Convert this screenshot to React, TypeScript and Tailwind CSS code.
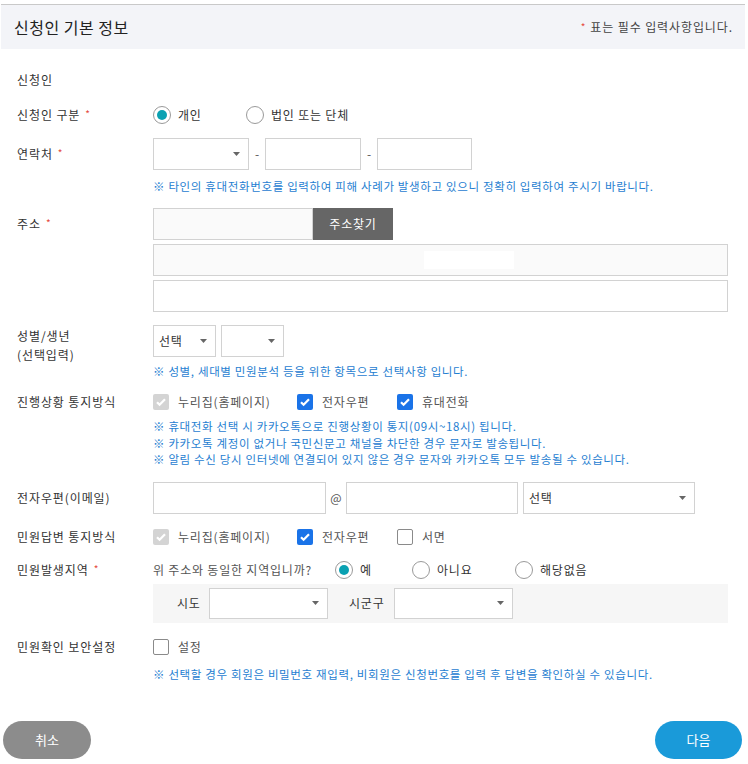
import React from "react";

const FONT = { fontFamily: '"Noto Sans CJK KR", "Noto Sans", sans-serif' };

function Req() {
  return <span className="ml-[5px] text-[10px] text-[#e5493e] relative -top-[2px]">*</span>;
}

function Label({ children, req }: { children: React.ReactNode; req?: boolean }) {
  return (
    <div className="w-[136px] shrink-0 text-[12px] tracking-[0.9px] leading-[20px] text-[#333]">
      {children}
      {req && <Req />}
    </div>
  );
}

function Arrow() {
  return (
    <svg width="7" height="4" viewBox="0 0 7 4" className="shrink-0">
      <path d="M0 0h7L3.5 4z" fill="#666" />
    </svg>
  );
}

function Select({ w, text, h = "h-[32px]" }: { w: string; text?: string; h?: string }) {
  return (
    <div
      className={`${w} ${h} shrink-0 border border-[#d2d2d2] bg-white flex items-center justify-between pl-[5px] pr-[8px] text-[12px] tracking-[0.8px] text-[#333]`}
    >
      <span>{text}</span>
      <Arrow />
    </div>
  );
}

function Box({ w, bg = "bg-white" }: { w: string; bg?: string }) {
  return <div className={`${w} h-[32px] shrink-0 border border-[#d2d2d2] ${bg}`} />;
}

function Note({ children }: { children: React.ReactNode }) {
  return <p className="text-[11.5px] tracking-[0.65px] leading-[16.5px] text-[#1f80d1] whitespace-nowrap">{children}</p>;
}

function Radio({ on }: { on?: boolean }) {
  return (
    <span className="w-[18px] h-[18px] rounded-full border border-[#9a9a9a] bg-white flex items-center justify-center shrink-0">
      {on && <span className="w-[10px] h-[10px] rounded-full bg-[#0aa1b2]" />}
    </span>
  );
}

function Check({ state }: { state: "on" | "off" | "disabled" }) {
  if (state === "off")
    return <span className="w-[16px] h-[16px] rounded-[2px] border border-[#8a8a8a] bg-white shrink-0" />;
  const bg = state === "on" ? "bg-[#1a73e8]" : "bg-[#d4d4d4]";
  return (
    <span className={`w-[16px] h-[16px] rounded-[2px] ${bg} flex items-center justify-center shrink-0`}>
      <svg width="12" height="12" viewBox="0 0 12 12">
        <path d="M2 6.2l2.6 2.6L10 3.2" stroke="#fff" strokeWidth="2.2" fill="none" />
      </svg>
    </span>
  );
}

function CheckItem({ state, label, w }: { state: "on" | "off" | "disabled"; label: string; w?: string }) {
  return (
    <div className={`flex items-center gap-[9px] ${w ?? ""}`}>
      <Check state={state} />
      <span className="text-[12px] tracking-[0.8px] text-[#555]">{label}</span>
    </div>
  );
}

function RadioItem({ on, label, w }: { on?: boolean; label: string; w?: string }) {
  return (
    <div className={`flex items-center gap-[7px] ${w ?? ""}`}>
      <Radio on={on} />
      <span className="text-[12px] tracking-[0.8px] text-[#333]">{label}</span>
    </div>
  );
}

export default function App() {
  return (
    <div className="w-[748px] h-[764px] bg-white overflow-hidden" style={FONT}>
      {/* header */}
      <div className="pt-[4px] pl-[1px] pr-[3px]">
        <div className="border-t border-[#c9c9c9] bg-[#f3f4f8] h-[45px] flex items-center justify-between pl-[13px] pr-[12px]">
          <h2 className="text-[16px] tracking-[0.5px] text-[#222]">신청인 기본 정보</h2>
          <p className="text-[12px] tracking-[0.9px] text-[#444]">
            <span className="text-[10px] text-[#e5493e] mr-[4px] relative -top-[1px]">*</span>표는 필수 입력사항입니다.
          </p>
        </div>
      </div>

      <div className="pl-[17px] pr-[20px]">
        <div className="mt-[21px] text-[12px] tracking-[0.9px] leading-[20px] text-[#333]">신청인</div>

        {/* 신청인 구분 */}
        <div className="mt-[15px] flex">
          <Label req>신청인 구분</Label>
          <div className="flex items-center h-[20px]">
            <RadioItem on label="개인" w="w-[93px]" />
            <RadioItem label="법인 또는 단체" />
          </div>
        </div>

        {/* 연락처 */}
        <div className="mt-[12px] flex">
          <div className="pt-[6px]">
            <Label req>연락처</Label>
          </div>
          <div>
            <div className="flex items-center">
              <Select w="w-[96px]" />
              <span className="w-[16px] text-center text-[12px] text-[#555]">-</span>
              <Box w="w-[96px]" />
              <span className="w-[16px] text-center text-[12px] text-[#555]">-</span>
              <Box w="w-[95px]" />
            </div>
            <div className="mt-[8px]">
              <Note>※ 타인의 휴대전화번호를 입력하여 피해 사례가 발생하고 있으니 정확히 입력하여 주시기 바랍니다.</Note>
            </div>
          </div>
        </div>

        {/* 주소 */}
        <div className="mt-[13px] flex">
          <div className="pt-[6px]">
            <Label req>주소</Label>
          </div>
          <div className="flex-1 flex flex-col gap-[4px]">
            <div className="flex">
              <Box w="w-[160px]" bg="bg-[#fafafa]" />
              <button className="w-[80px] h-[32px] bg-[#666] text-white text-[12px] tracking-[0.8px]">주소찾기</button>
            </div>
            <div className="h-[32px] border border-[#d2d2d2] bg-[#fafafa] pl-[270px] py-[6px]">
              <div className="w-[90px] h-full bg-white" />
            </div>
            <div className="h-[32px] border border-[#d2d2d2] bg-white" />
          </div>
        </div>

        {/* 성별/생년 */}
        <div className="mt-[13px] flex">
          <div className="w-[136px] shrink-0 pt-[1px] text-[12px] tracking-[0.9px] leading-[19px] text-[#333]">
            <p>성별/생년</p>
            <p>(선택입력)</p>
          </div>
          <div>
            <div className="flex gap-[5px]">
              <Select w="w-[63px]" text="선택" />
              <Select w="w-[63px]" />
            </div>
            <div className="mt-[6px]">
              <Note>※ 성별, 세대별 민원분석 등을 위한 항목으로 선택사항 입니다.</Note>
            </div>
          </div>
        </div>

        {/* 진행상황 통지방식 */}
        <div className="mt-[13px] flex">
          <Label>진행상황 통지방식</Label>
          <div>
            <div className="flex items-center h-[20px]">
              <CheckItem state="disabled" label="누리집(홈페이지)" w="w-[144px]" />
              <CheckItem state="on" label="전자우편" w="w-[100px]" />
              <CheckItem state="on" label="휴대전화" />
            </div>
            <div className="mt-[6px]">
              <Note>※ 휴대전화 선택 시 카카오톡으로 진행상황이 통지(09시~18시) 됩니다.</Note>
              <Note>※ 카카오톡 계정이 없거나 국민신문고 채널을 차단한 경우 문자로 발송됩니다.</Note>
              <Note>※ 알림 수신 당시 인터넷에 연결되어 있지 않은 경우 문자와 카카오톡 모두 발송될 수 있습니다.</Note>
            </div>
          </div>
        </div>

        {/* 전자우편 */}
        <div className="mt-[14px] flex">
          <div className="pt-[6px]">
            <Label>전자우편(이메일)</Label>
          </div>
          <div className="flex items-center">
            <Box w="w-[173px]" />
            <span className="w-[20px] text-center text-[12px] text-[#555]">@</span>
            <Box w="w-[172px]" />
            <div className="w-[5px]" />
            <Select w="w-[172px]" text="선택" />
          </div>
        </div>

        {/* 민원답변 통지방식 */}
        <div className="mt-[13px] flex">
          <Label>민원답변 통지방식</Label>
          <div className="flex items-center h-[20px]">
            <CheckItem state="disabled" label="누리집(홈페이지)" w="w-[144px]" />
            <CheckItem state="on" label="전자우편" w="w-[100px]" />
            <CheckItem state="off" label="서면" />
          </div>
        </div>

        {/* 민원발생지역 */}
        <div className="mt-[13px] flex">
          <Label req>민원발생지역</Label>
          <div className="flex-1">
            <div className="flex items-center h-[20px]">
              <span className="w-[182px] text-[12px] tracking-[0.8px] text-[#555]">위 주소와 동일한 지역입니까?</span>
              <RadioItem on label="예" w="w-[77px]" />
              <RadioItem label="아니요" w="w-[103px]" />
              <RadioItem label="해당없음" />
            </div>
            <div className="mt-[4px] h-[39px] bg-[#f6f6f6] flex items-center pl-[24px] text-[12px] tracking-[0.8px] text-[#333]">
              <span className="w-[32px]">시도</span>
              <Select w="w-[119px]" h="h-[31px]" />
              <span className="ml-[21px] w-[45px]">시군구</span>
              <Select w="w-[119px]" h="h-[31px]" />
            </div>
          </div>
        </div>

        {/* 민원확인 보안설정 */}
        <div className="mt-[14px] flex">
          <Label>민원확인 보안설정</Label>
          <div>
            <div className="flex items-center h-[20px]">
              <CheckItem state="off" label="설정" />
            </div>
            <div className="mt-[9px]">
              <Note>※ 선택할 경우 회원은 비밀번호 재입력, 비회원은 신청번호를 입력 후 답변을 확인하실 수 있습니다.</Note>
            </div>
          </div>
        </div>
      </div>

      {/* buttons */}
      <div className="mt-[39px] flex justify-between pl-[3px] pr-[6px]">
        <button className="w-[88px] h-[38px] rounded-full bg-[#8c8c8c] text-white text-[13px]">취소</button>
        <button className="w-[87px] h-[38px] rounded-full bg-[#1a9ad9] text-white text-[13px]">다음</button>
      </div>
    </div>
  );
}
